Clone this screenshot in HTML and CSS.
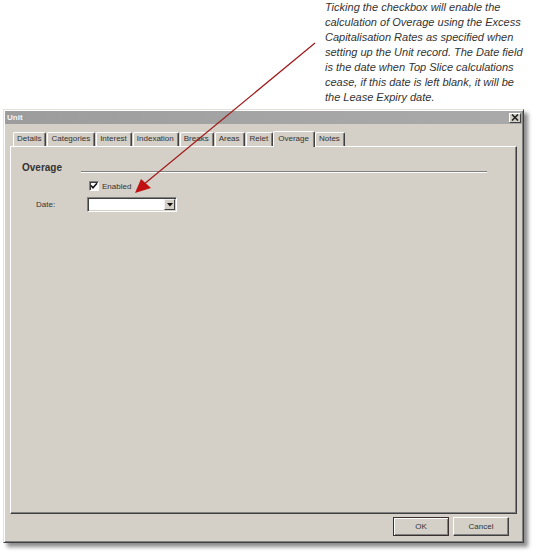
FILE: index.html
```html
<!DOCTYPE html>
<html>
<head>
<meta charset="utf-8">
<link rel="stylesheet" href="styles.css">
</head>
<body>
<div class="note">Ticking the checkbox will enable the<br>calculation of Overage using the Excess<br>Capitalisation Rates as specified when<br>setting up the Unit record. The Date field<br>is the date when Top Slice calculations<br>cease, if this date is left blank, it will be<br>the Lease Expiry date.</div>
<div class="dialog">
  <div class="titlebar">
    <span class="title">Unit</span>
    <span class="close"><svg width="8" height="7" viewBox="0 0 8 7"><path d="M1 0.5 L7 6.5 M7 0.5 L1 6.5" stroke="#222" stroke-width="1.6"/></svg></span>
  </div>
  <div class="body">
    <div class="tabs">
      <div class="tab">Details</div>
      <div class="tab">Categories</div>
      <div class="tab">Interest</div>
      <div class="tab">Indexation</div>
      <div class="tab">Breaks</div>
      <div class="tab">Areas</div>
      <div class="tab">Relet</div>
      <div class="tab active">Overage</div>
      <div class="tab">Notes</div>
    </div>
    <div class="panel">
      <div class="group-head">
        <span class="group-title">Overage</span>
        <span class="rule"></span>
      </div>
      <div class="check-row">
        <span class="checkbox"><svg width="8" height="8" viewBox="0 0 8 8"><path d="M1 3.5 L3 5.8 L7 1.2" fill="none" stroke="#111" stroke-width="1.5"/></svg></span>
        <span>Enabled</span>
      </div>
      <div class="date-row">
        <span class="label">Date:</span>
        <div class="combo">
          <span class="combo-field"></span>
          <span class="combo-btn"><svg width="6" height="4" viewBox="0 0 6 4"><path d="M0 0 H6 L3 3.5 Z" fill="#111"/></svg></span>
        </div>
      </div>
    </div>
    <div class="buttons">
      <div class="btn default">OK</div>
      <div class="btn">Cancel</div>
    </div>
  </div>
</div>
<svg class="arrow" width="537" height="556" viewBox="0 0 537 556">
  <line x1="315" y1="43" x2="143" y2="185" stroke="#a01818" stroke-width="1.2"/>
  <polygon points="135,193 141,179 151,188" fill="#c01010"/>
</svg>
</body>
</html>
```
FILE: styles.css
```css
html, body {
  margin: 0;
  padding: 0;
  background: #ffffff;
}
body {
  position: relative;
  width: 537px;
  height: 556px;
  overflow: hidden;
  font-family: "Liberation Sans", Arial, sans-serif;
}
.note {
  margin-left: 325px;
  height: 109px;
  font-style: italic;
  font-size: 11px;
  line-height: 15px;
  color: #333333;
  white-space: nowrap;
}
.dialog {
  margin-left: 3px;
  width: 521px;
  height: 434px;
  box-sizing: border-box;
  padding: 1px;
  background: #d4d0c8;
  border: 1px solid;
  border-color: #e4e1da #404040 #404040 #e4e1da;
  box-shadow: inset 1px 1px 0 #ffffff, inset -1px -1px 0 #808080, 4px 4px 4px rgba(0,0,0,0.45);
  display: flex;
  flex-direction: column;
  font-size: 8px;
  color: #222;
}
.titlebar {
  height: 13px;
  background: linear-gradient(to right, #9c9c9c, #a6a6a6 60%, #a9a9a9);
  display: flex;
  align-items: center;
  justify-content: space-between;
}
.title {
  color: #f4f4f4;
  font-weight: bold;
  font-size: 8px;
  padding-left: 2px;
}
.close {
  width: 12px;
  height: 10px;
  box-sizing: border-box;
  margin-right: 1px;
  background: #d4d0c8;
  border: 1px solid;
  border-color: #ffffff #404040 #404040 #ffffff;
  display: flex;
  align-items: center;
  justify-content: center;
}
.body {
  flex: 1;
  display: flex;
  flex-direction: column;
  padding: 7px 5px 0 5px;
}
.tabs {
  display: flex;
  height: 15px;
  padding-left: 3px;
  align-items: flex-end;
}
.tab {
  height: 14px;
  box-sizing: border-box;
  padding: 0 4px 0 3px;
  line-height: 12px;
  border: 1px solid;
  border-bottom: none;
  border-color: #ffffff #404040 transparent #ffffff;
  box-shadow: inset -1px 0 0 #808080;
  margin-right: 1px;
  border-radius: 2px 2px 0 0;
  color: #333;
}
.tab.active {
  height: 16px;
  margin: 0 0 -1px -1px;
  padding: 0 5px 0 4px;
  background: #d4d0c8;
  position: relative;
  z-index: 1;
  line-height: 13px;
}
.panel {
  width: 507px;
  height: 368px;
  box-sizing: border-box;
  border: 1px solid;
  border-color: #ffffff #404040 #404040 #ffffff;
  box-shadow: inset -1px -1px 0 #808080;
  padding: 15px 29px 0 11px;
  display: flex;
  flex-direction: column;
}
.group-head {
  display: flex;
  align-items: flex-end;
  height: 12px;
}
.group-title {
  font-weight: bold;
  font-size: 10px;
  line-height: 12px;
  color: #333;
}
.rule {
  flex: 1;
  margin-left: 19px;
  margin-bottom: 1px;
  border-top: 1px solid #808080;
  border-bottom: 1px solid #ffffff;
}
.check-row {
  display: flex;
  align-items: center;
  margin-top: 7px;
  padding-left: 67px;
  gap: 3px;
  height: 10px;
  color: #333;
}
.checkbox {
  width: 10px;
  height: 10px;
  box-sizing: border-box;
  background: #ffffff;
  border: 1px solid;
  border-color: #808080 #ffffff #ffffff #808080;
  box-shadow: inset 1px 1px 0 #404040;
  display: flex;
  align-items: center;
  justify-content: center;
}
.date-row {
  display: flex;
  align-items: center;
  margin-top: 6px;
  height: 15px;
}
.label {
  width: 51px;
  padding-left: 14px;
  color: #333;
}
.combo {
  width: 90px;
  height: 15px;
  box-sizing: border-box;
  border: 1px solid;
  border-color: #808080 #ffffff #ffffff #808080;
  box-shadow: inset 1px 1px 0 #404040, inset -1px -1px 0 #d4d0c8;
  background: #ffffff;
  display: flex;
  padding: 1px;
}
.combo-field {
  flex: 1;
}
.combo-btn {
  width: 11px;
  box-sizing: border-box;
  background: #d4d0c8;
  border: 1px solid;
  border-color: #f0f0f0 #404040 #404040 #f0f0f0;
  display: flex;
  align-items: center;
  justify-content: center;
}
.buttons {
  display: flex;
  justify-content: flex-end;
  gap: 4px;
  margin-top: 3px;
  padding-right: 8px;
}
.btn {
  width: 56px;
  height: 19px;
  box-sizing: border-box;
  border: 1px solid;
  border-color: #ffffff #404040 #404040 #ffffff;
  box-shadow: inset -1px -1px 0 #808080;
  display: flex;
  align-items: center;
  justify-content: center;
  color: #333;
}
.btn.default {
  border: 1px solid #3a3030;
  box-shadow: inset 1px 1px 0 #ffffff, inset -1px -1px 0 #808080;
}
.arrow {
  position: absolute;
  left: 0;
  top: 0;
  pointer-events: none;
}
```
